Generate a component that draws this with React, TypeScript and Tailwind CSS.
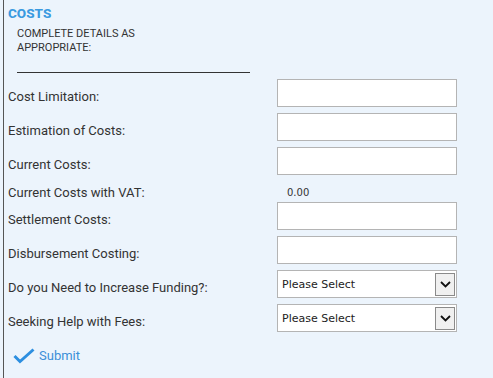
const rows: { label: string; kind: 'input' | 'value' | 'select'; value?: string }[] = [
  { label: 'Cost Limitation:', kind: 'input' },
  { label: 'Estimation of Costs:', kind: 'input' },
  { label: 'Current Costs:', kind: 'input' },
  { label: 'Current Costs with VAT:', kind: 'value', value: '0.00' },
  { label: 'Settlement Costs:', kind: 'input' },
  { label: 'Disbursement Costing:', kind: 'input' },
  { label: 'Do you Need to Increase Funding?:', kind: 'select' },
  { label: 'Seeking Help with Fees:', kind: 'select' },
];

function SelectBox() {
  return (
    <div className="flex h-[28px] w-[180px] items-center justify-between border border-[#b4b4b4] bg-white pl-[4px] pr-[1px]">
      <span className="pt-[2px] text-[11px] text-[#222] [font-family:'DejaVu_Sans',sans-serif]">Please Select</span>
      <span className="flex h-[23px] w-[20px] items-center justify-center border border-[#8a8a8a] bg-[#f0f0f0]">
        <svg width="11" height="7" viewBox="0 0 11 7">
          <path d="M1 1 L5.5 5.5 L10 1" fill="none" stroke="#111" strokeWidth="1.8" />
        </svg>
      </span>
    </div>
  );
}

export default function App() {
  return (
    <div className="h-[378px] w-[493px] bg-[#ecf4fc] pl-[3px] [font-family:Roboto,'Liberation_Sans',sans-serif]">
      <div className="h-full border-l border-[#555] pl-[4px] pt-[5px]">
        <h2 className="text-[13.5px] font-extrabold leading-[16px] text-[#3a9ae0]">COSTS</h2>
        <div className="ml-[9px] mt-[6px] w-[233px]">
          <p className="text-[11px] leading-[14px] text-[#333]">
            COMPLETE DETAILS AS
            <br />
            APPROPRIATE:
          </p>
          <div className="mt-[17px] h-px bg-[#333]" />
        </div>

        <div className="mt-[6px] flex flex-col gap-[6px]">
          {rows.map((row) => (
            <div
              key={row.label}
              className={row.kind === 'value' ? 'flex h-[15px] items-center' : 'flex h-[28px] items-center'}
            >
              <label className="w-[269px] pt-[7px] text-[13px] leading-[15px] text-[#333]">{row.label}</label>
              {row.kind === 'input' && <div className="h-[28px] w-[180px] border border-[#b4b4b4] bg-white" />}
              {row.kind === 'value' && (
                <span className="pl-[10px] pt-[7px] text-[10px] leading-[15px] text-[#333] [font-family:'DejaVu_Sans',sans-serif]">
                  {row.value}
                </span>
              )}
              {row.kind === 'select' && <SelectBox />}
            </div>
          ))}
        </div>

        <button className="ml-[5px] mt-[14px] flex items-center gap-[4px] text-[13px] text-[#3b8fd8]">
          <svg width="22" height="16" viewBox="0 0 22 16">
            <path d="M1.5 8 L7 13.5 L20.5 1.5" fill="none" stroke="#2d8fe0" strokeWidth="3" />
          </svg>
          Submit
        </button>
      </div>
    </div>
  );
}
